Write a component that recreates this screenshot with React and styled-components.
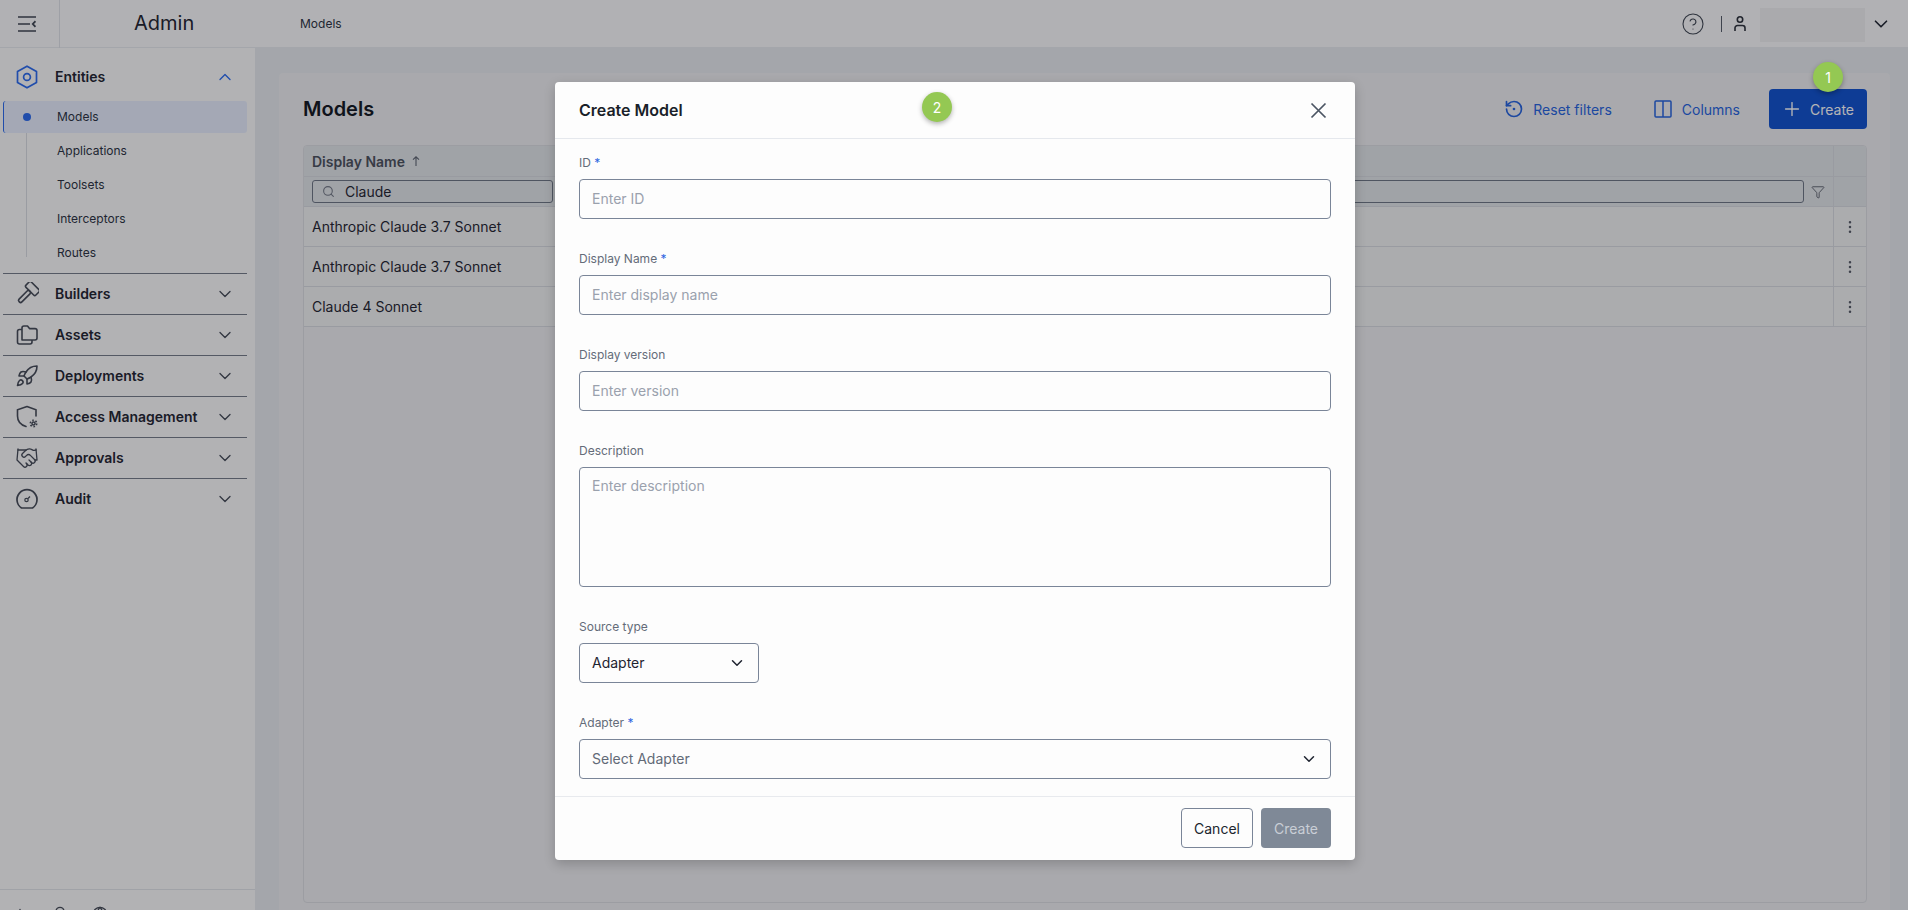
import React from 'react';
import styled, { createGlobalStyle } from 'styled-components';
import {
	Bell,
	ChevronDown,
	ChevronUp,
	CircleHelp,
	EllipsisVertical,
	Funnel,
	Globe,
	Handshake,
	Plus,
	Rocket,
	Search,
} from 'lucide-react';

const GlobalStyle = createGlobalStyle`
	html, body {
		margin: 0;
		height: 100%;
		overflow: hidden;
		font-family: Inter, "Liberation Sans", sans-serif;
		color: #1f2430;
	}
	* { box-sizing: border-box; }
`;

const HamburgerIcon = () => (
	<svg width='18' height='16' viewBox='0 0 18 16' fill='none' stroke='#3f4652' strokeWidth='1.6'>
		<path d='M0 1h18M0 8h12M0 15h18' />
		<path d='M17.5 5.2 14.8 8l2.7 2.8' strokeWidth='1.8' />
	</svg>
);
const HexIcon = () => (
	<svg width='24' height='24' viewBox='0 0 24 24' fill='none' stroke='#2a6bf0' strokeWidth='1.7'>
		<path d='M12 1.2 21.5 6.6v10.8L12 22.8 2.5 17.4V6.6z' strokeLinejoin='round' />
		<circle cx='12' cy='12' r='3.4' />
	</svg>
);
const HammerIcon = () => (
	<svg width='24' height='24' viewBox='0 0 24 24' fill='none' stroke='#454b57' strokeWidth='1.6'>
		<g transform='rotate(45 12 12)'>
			<rect x='5' y='0.5' width='14' height='7.5' rx='1.6' />
			<rect x='10' y='8' width='4' height='15' rx='1.8' />
		</g>
	</svg>
);
const FoldersIcon = () => (
	<svg width='24' height='24' viewBox='0 0 24 24' fill='none' stroke='#454b57' strokeWidth='1.6' strokeLinejoin='round'>
		<path d='M7 5a2 2 0 0 1 2-2h3.5l2 2.6H20a2 2 0 0 1 2 2V15a2 2 0 0 1-2 2H7z' />
		<path d='M7 6.5H4.5a2 2 0 0 0-2 2V19a2 2 0 0 0 2 2H15a2 2 0 0 0 2-2v-2' />
	</svg>
);
const ShieldGearIcon = () => (
	<svg width='24' height='24' viewBox='0 0 24 24' fill='none' stroke='#454b57' strokeWidth='1.6' strokeLinecap='round'>
		<path d='M12 1.5 21 4.8V11M12 1.5 2.5 4.8V11c0 5.4 3.6 9 8.5 10.5' />
		<circle cx='18.5' cy='18.5' r='2.2' fill='#454b57' stroke='none' />
		<circle cx='18.5' cy='18.5' r='3.2' strokeWidth='1.6' strokeDasharray='1.6 1.75' strokeLinecap='butt' />
		<circle cx='18.5' cy='18.5' r='0.8' fill='#fbfcfd' stroke='none' />
	</svg>
);
const GaugeIcon = () => (
	<svg width='24' height='24' viewBox='0 0 24 24' fill='none' stroke='#454b57' strokeWidth='1.7' strokeLinejoin='round'>
		<path d='M6.5 21a10 10 0 1 1 11 0z' />
		<circle cx='11.5' cy='13' r='1.7' strokeWidth='1.2' />
		<path d='M13 11.5 15 9.5' strokeWidth='1.3' />
	</svg>
);
const UserIcon = () => (
	<svg width='12' height='15' viewBox='0 0 12 15' fill='none' stroke='#2a2f39' strokeWidth='1.6'>
		<circle cx='6' cy='3.5' r='2.7' />
		<path d='M1 15v-3a2.5 2.5 0 0 1 2.5-2.5h5A2.5 2.5 0 0 1 11 12v3' />
	</svg>
);
const ResetIcon = () => (
	<svg width='20' height='20' viewBox='0 0 24 24' fill='none' stroke='currentColor' strokeWidth='2' strokeLinecap='round' strokeLinejoin='round'>
		<path d='M3 12a9 9 0 1 0 9-9 9.75 9.75 0 0 0-6.74 2.74L3 8' />
		<path d='M3 3v5h5' />
		<circle cx='12' cy='12' r='1.6' fill='currentColor' stroke='none' />
	</svg>
);
const ColumnsIcon = () => (
	<svg width='18' height='18' viewBox='0 0 18 18' fill='none' stroke='currentColor' strokeWidth='1.5'>
		<rect x='1' y='1' width='16' height='16' rx='1' />
		<path d='M9 1v16' />
	</svg>
);
const CloseIcon = () => (
	<svg width='17' height='17' viewBox='0 0 17 17' fill='none' stroke='#4b5563' strokeWidth='1.7'>
		<path d='M1.5 1.5l14 14M15.5 1.5l-14 14' />
	</svg>
);
const UpArrow = () => (
	<svg width='8' height='10' viewBox='0 0 8 10' fill='none' stroke='#5d6470' strokeWidth='1.1'>
		<path d='M4 10V1M1 3.6 4 .8l3 2.8' />
	</svg>
);

const groups = [
	{ name: 'Builders', icon: <HammerIcon /> },
	{ name: 'Assets', icon: <FoldersIcon /> },
	{ name: 'Deployments', icon: <Rocket size={24} strokeWidth={1.6} color='#454b57' /> },
	{ name: 'Access Management', icon: <ShieldGearIcon /> },
	{ name: 'Approvals', icon: <Handshake size={26} strokeWidth={1.3} color='#454b57' /> },
	{ name: 'Audit', icon: <GaugeIcon /> },
];
const entities = ['Models', 'Applications', 'Toolsets', 'Interceptors', 'Routes'];
const rows = ['Anthropic Claude 3.7 Sonnet', 'Anthropic Claude 3.7 Sonnet', 'Claude 4 Sonnet'];

export default function App() {
	return (
		<Page>
			<GlobalStyle />
			<Header>
				<Toggle>
					<HamburgerIcon />
				</Toggle>
				<Brand>Admin</Brand>
				<Crumb>Models</Crumb>
				<HeaderRight>
					<CircleHelp size={24} strokeWidth={1.1} color='#3f4652' />
					<VLine />
					<UserIcon />
					<UserBox />
					<ChevronDown size={22} strokeWidth={1.8} color='#1f2430' />
				</HeaderRight>
			</Header>
			<Body>
				<Sidebar>
					<Nav>
						<GroupRow>
							<GroupIcon>
								<HexIcon />
							</GroupIcon>
							<GroupName>Entities</GroupName>
							<ChevronUp size={20} strokeWidth={1.6} color='#2a6bf0' />
						</GroupRow>
						<EntityList>
							{entities.map((name, i) => (
								<EntityItem key={name} $active={i === 0}>
									{name}
								</EntityItem>
							))}
						</EntityList>
						{groups.map((g) => (
							<GroupBlock key={g.name}>
								<GroupRow>
									<GroupIcon>{g.icon}</GroupIcon>
									<GroupName>{g.name}</GroupName>
									<ChevronDown size={20} strokeWidth={1.6} color='#454b57' />
								</GroupRow>
							</GroupBlock>
						))}
					</Nav>
					<SideFooter>
						<Plus size={16} color='#454b57' />
						<Bell size={16} color='#454b57' />
						<Globe size={16} color='#454b57' />
					</SideFooter>
				</Sidebar>
				<Main>
					<Panel>
						<Toolbar>
							<PageTitle>Models</PageTitle>
							<ToolbarActions>
								<TextButton $tight>
									<ResetIcon />
									Reset filters
								</TextButton>
								<TextButton>
									<ColumnsIcon />
									Columns
								</TextButton>
								<PrimaryButton>
									<Plus size={22} strokeWidth={1.5} />
									Create
								</PrimaryButton>
							</ToolbarActions>
						</Toolbar>
						<Table>
							<HeadRow>
								<HeadCell>
									Display Name <UpArrow />
								</HeadCell>
								<HeadCell />
								<ActionCell />
							</HeadRow>
							<FilterRow>
								<FilterCell>
									<FilterBox>
										<Search size={13} color='#737a86' />
										Claude
									</FilterBox>
								</FilterCell>
								<FilterCell $wide>
									<FilterBox />
									<Funnel size={14} strokeWidth={1.4} color='#4b515c' />
								</FilterCell>
								<ActionCell />
							</FilterRow>
							{rows.map((name, i) => (
								<DataRow key={i}>
									<DataCell>{name}</DataCell>
									<DataCell />
									<ActionCell>
										<EllipsisVertical size={16} strokeWidth={1.8} color='#555b66' />
									</ActionCell>
								</DataRow>
							))}
						</Table>
					</Panel>
				</Main>
			</Body>
			<Overlay>
				<Modal>
					<Badge $left={367} $top={10}>2</Badge>
					<ModalHeader>
						<ModalTitle>Create Model</ModalTitle>
						<CloseIcon />
					</ModalHeader>
					<ModalBody>
						<Field>
							<Label>ID <Req>*</Req></Label>
							<Input placeholder='Enter ID' />
						</Field>
						<Field>
							<Label>Display Name <Req>*</Req></Label>
							<Input placeholder='Enter display name' />
						</Field>
						<Field>
							<Label>Display version</Label>
							<Input placeholder='Enter version' />
						</Field>
						<Field>
							<Label>Description</Label>
							<TextArea placeholder='Enter description' />
						</Field>
						<Field>
							<Label>Source type</Label>
							<SelectBox $narrow>
								Adapter
								<ChevronDown size={18} strokeWidth={2} color='#1f2430' />
							</SelectBox>
						</Field>
						<Field>
							<Label>Adapter <Req>*</Req></Label>
							<SelectBox $muted>
								Select Adapter
								<ChevronDown size={18} strokeWidth={2} color='#1f2430' />
							</SelectBox>
						</Field>
					</ModalBody>
					<ModalFooter>
						<CancelButton>Cancel</CancelButton>
						<SubmitButton disabled>Create</SubmitButton>
					</ModalFooter>
				</Modal>
			</Overlay>
			<Badge $left={1813} $top={62}>1</Badge>
		</Page>
	);
}

const Page = styled.div`
	position: relative;
	width: 100%;
	height: 100vh;
	overflow: hidden;
	background: #e8ebef;
`;
const Header = styled.header`
	display: flex;
	align-items: center;
	height: 48px;
	background: #fbfbfc;
	border-bottom: 1px solid #e8ebf0;
`;
const Toggle = styled.div`
	display: flex;
	align-items: center;
	justify-content: center;
	width: 60px;
	height: 48px;
	padding-right: 5px;
	border-right: 1px solid #dfe2e8;
`;
const Brand = styled.div`
	width: 240px;
	margin-bottom: 2px;
	padding-left: 74px;
	font-size: 20px;
	line-height: 24px;
	color: #1f2430;
`;
const Crumb = styled.div`
	font-size: 12px;
	color: #2a3140;
`;
const HeaderRight = styled.div`
	display: flex;
	align-items: center;
	margin-left: auto;
	padding-right: 16px;
`;
const VLine = styled.div`
	width: 1px;
	height: 16px;
	margin: 0 12px 0 16px;
	background: #555c68;
`;
const UserBox = styled.div`
	width: 105px;
	height: 34px;
	margin: 2px 5px 0 14px;
	background: #f1f1f2;
`;
const Body = styled.div`
	display: flex;
	height: 862px;
`;
const Sidebar = styled.aside`
	flex: 0 0 255px;
	height: 862px;
	overflow: hidden;
	background: #fcfcfd;
`;
const Nav = styled.nav`
	height: 842px;
	padding: 9px 8px 0 3px;
	border-bottom: 1px solid #e3e5ea;
`;
const GroupBlock = styled.div`
	border-top: 1px solid #757c88;
`;
const GroupRow = styled.div`
	display: flex;
	align-items: center;
	height: 40px;
	padding: 0 12px 0 12px;
`;
const GroupIcon = styled.div`
	display: flex;
	align-items: center;
	justify-content: center;
	width: 24px;
	height: 24px;
	margin-right: 16px;
`;
const GroupName = styled.div`
	flex: 1;
	padding-bottom: 1px;
	font-size: 14px;
	font-weight: 600;
	color: #1f2430;
`;
const EntityList = styled.ul`
	position: relative;
	display: flex;
	flex-direction: column;
	gap: 2px;
	margin: 4px 0;
	padding: 0;
	list-style: none;
	&::before {
		content: '';
		position: absolute;
		left: 23px;
		top: 16px;
		bottom: 12px;
		width: 1px;
		background: #dadde3;
	}
`;
const EntityItem = styled.li`
	position: relative;
	display: flex;
	align-items: center;
	height: 32px;
	padding: 0 0 1px 54px;
	font-size: 12px;
	color: #2a3140;
	border-radius: 3px;
	background: ${(p) => (p.$active ? '#e8eefe' : 'transparent')};
	border-left: ${(p) => (p.$active ? '1px solid #2a6bf0' : '0')};
	${(p) =>
		p.$active &&
		`
		padding-left: 53px;
		&::before {
			content: '';
			position: absolute;
			left: 19px;
			top: 12px;
			width: 8px;
			height: 8px;
			border-radius: 50%;
			background: #2a6bf0;
		}
	`}
`;
const SideFooter = styled.div`
	display: flex;
	gap: 24px;
	padding: 16px 12px;
`;
const Main = styled.main`
	flex: 1;
	min-width: 0;
	padding: 25px 18px 0 24px;
`;
const Panel = styled.section`
	height: 900px;
	padding: 0 23px 0 24px;
	border-radius: 4px;
	background: #eff0f2;
`;
const Toolbar = styled.div`
	display: flex;
	align-items: center;
	justify-content: space-between;
	height: 72px;
`;
const PageTitle = styled.h1`
	margin: 0;
	font-size: 20px;
	font-weight: 600;
	color: #111620;
`;
const ToolbarActions = styled.div`
	display: flex;
	align-items: center;
	gap: 13px;
`;
const TextButton = styled.button`
	display: flex;
	align-items: center;
	gap: ${(p) => (p.$tight ? '9px' : '10px')};
	height: 40px;
	padding: ${(p) => (p.$tight ? '0 13px 0 16px' : '0 16px')};
	border: 0;
	background: transparent;
	font: inherit;
	font-size: 14px;
	color: #2563e0;
`;
const PrimaryButton = styled.button`
	display: flex;
	align-items: center;
	gap: 7px;
	width: 98px;
	height: 40px;
	padding: 0 0 0 12px;
	border: 0;
	border-radius: 4px;
	background: #0f52d0;
	font: inherit;
	font-size: 14px;
	color: #fff;
`;
const Table = styled.div`
	height: 758px;
	border: 1px solid #dcdee3;
	border-radius: 4px;
	overflow: hidden;
`;
const gridCols = 'grid-template-columns: 262px 1fr 33px;';
const HeadRow = styled.div`
	display: grid;
	${gridCols}
	height: 31px;
	background: #e3e6ea;
	border-bottom: 1px solid #d8dbe1;
`;
const HeadCell = styled.div`
	display: flex;
	align-items: center;
	gap: 7px;
	padding: 0 8px;
	font-size: 14px;
	font-weight: 600;
	color: #4a505c;
`;
const FilterRow = styled.div`
	display: grid;
	${gridCols}
	height: 30px;
	background: #e3e6ea;
	border-bottom: 1px solid #d8dbe1;
`;
const FilterCell = styled.div`
	display: flex;
	align-items: center;
	gap: ${(p) => (p.$wide ? '7px' : '6px')};
	padding: ${(p) => (p.$wide ? '0 8px 0 8px' : '0 13px 0 8px')};
`;
const FilterBox = styled.div`
	display: flex;
	flex: 1;
	align-items: center;
	gap: 10px;
	height: 23px;
	padding-left: 9px;
	border: 1px solid #6d7684;
	border-radius: 3px;
	font-size: 14px;
	color: #1f2430;
`;
const DataRow = styled.div`
	display: grid;
	${gridCols}
	height: 40px;
	background: #f2f3f4;
	border-bottom: 1px solid #d8dbe1;
`;
const DataCell = styled.div`
	display: flex;
	align-items: center;
	padding: 0 8px;
	font-size: 14px;
	color: #1f2430;
`;
const ActionCell = styled.div`
	display: flex;
	align-items: center;
	justify-content: center;
	border-left: 1px solid #d8dbe1;
`;
const Overlay = styled.div`
	position: absolute;
	inset: 0;
	z-index: 10;
	display: flex;
	justify-content: center;
	padding: 82px 0 0 2px;
	background: rgba(14, 14, 18, 0.31);
`;
const Modal = styled.div`
	position: relative;
	display: flex;
	flex-direction: column;
	width: 800px;
	height: 778px;
	border-radius: 4px;
	background: #fdfdfd;
	box-shadow: 0 4px 12px rgba(0, 0, 0, 0.2);
`;
const ModalHeader = styled.div`
	display: flex;
	align-items: center;
	justify-content: space-between;
	height: 57px;
	padding: 0 28px 0 24px;
	border-bottom: 1px solid #e5e8ed;
`;
const ModalTitle = styled.h2`
	margin: 0;
	font-size: 16px;
	font-weight: 600;
	color: #1a1f29;
`;
const ModalBody = styled.div`
	display: flex;
	flex: 1;
	flex-direction: column;
	gap: 30px;
	padding: 14px 24px 0;
`;
const Field = styled.div`
	display: flex;
	flex-direction: column;
	gap: 8px;
`;
const Label = styled.label`
	display: block;
	height: 18px;
	font-size: 12px;
	line-height: 20px;
	color: #646c79;
`;
const Req = styled.span`
	color: #2f66e0;
`;
const inputBase = `
	width: 100%;
	padding: 0 12px;
	border: 1px solid #7a8598;
	border-radius: 4px;
	background: transparent;
	font: inherit;
	font-size: 14px;
	color: #1f2430;
	outline: none;
	&::placeholder { color: #9aa1ad; opacity: 1; }
`;
const Input = styled.input`
	${inputBase}
	height: 40px;
	padding-bottom: 2px;
`;
const TextArea = styled.textarea`
	${inputBase}
	display: block;
	height: 120px;
	padding-top: 9px;
	resize: none;
`;
const SelectBox = styled.div`
	display: flex;
	align-items: center;
	justify-content: space-between;
	width: ${(p) => (p.$narrow ? '180px' : '100%')};
	height: 40px;
	padding: 0 12px 1px 12px;
	border: 1px solid #7a8598;
	border-radius: 4px;
	font-size: 14px;
	color: ${(p) => (p.$muted ? '#626a77' : '#1f2430')};
`;
const ModalFooter = styled.div`
	display: flex;
	align-items: center;
	justify-content: flex-end;
	gap: 8px;
	height: 64px;
	padding: 0 24px 1px;
	border-top: 1px solid #e8eaee;
`;
const CancelButton = styled.button`
	width: 72px;
	height: 40px;
	border: 1px solid #7a8598;
	border-radius: 4px;
	background: transparent;
	font: inherit;
	font-size: 14px;
	color: #20252e;
`;
const SubmitButton = styled.button`
	width: 70px;
	height: 40px;
	border: 0;
	border-radius: 4px;
	background: #7f8997;
	font: inherit;
	font-size: 14px;
	color: #c9ced6;
`;
const Badge = styled.div`
	position: absolute;
	left: ${(p) => p.$left}px;
	top: ${(p) => p.$top}px;
	z-index: 20;
	display: flex;
	align-items: center;
	justify-content: center;
	width: 30px;
	height: 30px;
	border-radius: 50%;
	background: #94c853;
	box-shadow: 0 2px 5px rgba(0, 0, 0, 0.3);
	font-size: 14px;
	color: #fff;
`;
